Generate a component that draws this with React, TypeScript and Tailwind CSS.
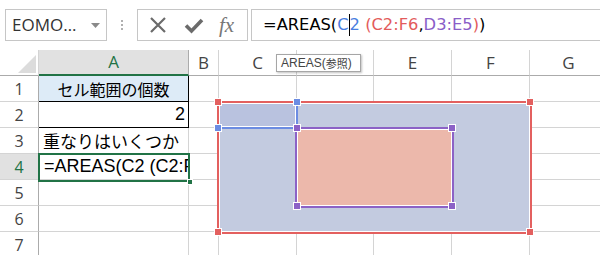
const font = "font-['Open_Sans','Liberation_Sans',sans-serif]";
const cjk = "font-['Noto_Sans_CJK_JP',sans-serif]";
const arial = "font-['Liberation_Sans',sans-serif]";

const cols = ["A", "B", "C", "D", "E", "F", "G"];
const rows = [1, 2, 3, 4, 5, 6, 7];

type Box = { x: number; y: number; w: number; h: number };

function Handle({ cx, cy, color }: { cx: number; cy: number; color: string }) {
  return (
    <div
      className="absolute h-2 w-2 border border-white"
      style={{ left: cx - 4, top: cy - 4, background: color }}
    />
  );
}

function RangeBorder({ b, color }: { b: Box; color: string }) {
  return (
    <div
      className="absolute border-2 shadow-[inset_0_0_0_1px_white]"
      style={{ left: b.x, top: b.y, width: b.w, height: b.h, borderColor: color }}
    />
  );
}

// overlay coordinates relative to the grid (grid top = page y 50)
const red: Box = { x: 217, y: 51, w: 315, h: 133 };
const blue: Box = { x: 217, y: 51, w: 81, h: 28 };
const purple: Box = { x: 295, y: 77, w: 159, h: 81 };

const RED = "#e3605f";
const BLUE = "#6c8ce2";
const PURPLE = "#8c62c6";

function Grid() {
  return (
    <div className="relative overflow-hidden">
      <div className="grid grid-cols-[39px_150px_30px_78px_77px_78px_78px_78px] grid-rows-[26px_repeat(7,26px)]">
        {/* corner */}
        <div className="relative border-r border-b border-r-[#d4d4d4] border-b-[#ababab] bg-white">
          <svg className="absolute left-[18px] top-[5px]" width="18" height="18" viewBox="0 0 18 18">
            <polygon points="18,0 18,18 0,18" fill="#dcdcdc" />
          </svg>
        </div>
        {cols.map((c) => (
          <div
            key={c}
            className={
              c === "A"
                ? "flex items-center justify-center border-r border-r-[#ababab] border-b-2 border-b-[#217346] bg-[#e1e1e1] text-[17px] text-[#217346]"
                : "flex items-center justify-center border-r border-b border-r-[#d4d4d4] border-b-[#ababab] bg-white text-[17px] text-[#444]"
            }
          >
            {c === "D" ? "" : c}
          </div>
        ))}
        {rows.map((r) => (
          <Row key={r} r={r} />
        ))}
      </div>

      {/* range fills */}
      <div className="absolute bg-[#c3cbe0]" style={{ left: red.x, top: red.y, width: red.w, height: red.h }} />
      <div className="absolute bg-[#b9c2df]" style={{ left: blue.x, top: blue.y, width: blue.w, height: blue.h }} />
      <div className="absolute bg-[#ecb8ab]" style={{ left: purple.x, top: purple.y, width: purple.w, height: purple.h }} />

      <RangeBorder b={blue} color={BLUE} />
      <RangeBorder b={purple} color={PURPLE} />
      <RangeBorder b={red} color={RED} />

      <Handle cx={297} cy={52} color={BLUE} />
      <Handle cx={218} cy={78} color={BLUE} />
      <Handle cx={297} cy={78} color={PURPLE} />
      <Handle cx={452} cy={78} color={PURPLE} />
      <Handle cx={297} cy={156} color={PURPLE} />
      <Handle cx={452} cy={156} color={PURPLE} />
      <Handle cx={218} cy={52} color={RED} />
      <Handle cx={530} cy={52} color={RED} />
      <Handle cx={218} cy={182} color={RED} />
      <Handle cx={530} cy={182} color={RED} />

      {/* active cell A4 */}
      <div className="absolute left-[38px] top-[103px] h-[29px] w-[152px] border-2 border-[#217346]" />
      <div className="absolute left-[187px] top-[129px] h-[6px] w-[6px] border border-white bg-[#217346]" />

      {/* function tooltip */}
      <div className="absolute left-[276px] top-[4px] flex h-[18px] w-[85px] items-center border border-[#a6a6a6] bg-white pl-[4px] text-[12px] text-[#444] shadow-[1px_1px_2px_rgba(0,0,0,0.25)]">
        <span className={arial}>AREAS(</span>
        <span className={cjk + " text-[11px]"}>参照</span>
        <span className={arial}>)</span>
      </div>
    </div>
  );
}

function Row({ r }: { r: number }) {
  const head =
    r === 4
      ? "flex items-center justify-center border-r border-b border-r-[#ababab] border-b-[#d4d4d4] bg-[#e1e1e1] text-[16px] text-[#217346]"
      : "flex items-center justify-center border-r border-b border-r-[#ababab] border-b-[#d4d4d4] bg-white text-[16px] text-[#444]";
  let a: React.ReactNode = null;
  let aCls = "border-r border-b border-[#d4d4d4]";
  if (r === 1) {
    aCls = "flex items-center justify-center border-r border-b border-black bg-[#ddebf7]";
    a = <span className={cjk + " text-[16px] text-black"}>セル範囲の個数</span>;
  } else if (r === 2) {
    aCls = "flex items-center justify-end border-r border-b border-black pr-[3px]";
    a = <span className={arial + " text-[18px] text-black"}>2</span>;
  } else if (r === 3) {
    aCls = "flex items-center border-r border-b border-[#d4d4d4] pl-[4px]";
    a = <span className={cjk + " text-[17px] whitespace-nowrap text-black"}>重なりはいくつか</span>;
  } else if (r === 4) {
    aCls = "flex items-center overflow-hidden border-r border-b border-[#d4d4d4] pl-[5px]";
    a = <span className={arial + " whitespace-nowrap text-[18px] text-black"}>=AREAS(C2 (C2:F6,D3:E5))</span>;
  }
  return (
    <>
      <div className={head}>{r}</div>
      <div className={aCls}>{a}</div>
      {cols.slice(1).map((c) => (
        <div key={c} className="border-r border-b border-[#d4d4d4]" />
      ))}
    </>
  );
}

export default function App() {
  return (
    <div className={"h-[255px] w-[600px] overflow-hidden bg-white " + font}>
      <div className="flex h-[50px] items-start pt-[9px]">
        <div className="ml-[5px] flex h-[32px] w-[102px] items-center border border-[#c6c6c6] pl-[6px]">
          <span className="text-[17px] text-[#333]">EOMO…</span>
          <svg className="ml-auto mr-[6px]" width="9" height="5" viewBox="0 0 9 5">
            <polygon points="0,0 9,0 4.5,5" fill="#8a8a8a" />
          </svg>
        </div>
        <div className="flex h-[32px] w-[30px] flex-col items-center justify-center gap-[2px]">
          <span className="h-[2px] w-[2px] bg-[#b0b0b0]" />
          <span className="h-[2px] w-[2px] bg-[#b0b0b0]" />
          <span className="h-[2px] w-[2px] bg-[#b0b0b0]" />
        </div>
        <div className="flex h-[32px] w-[111px] items-center border border-[#c6c6c6]">
          <svg className="ml-[11px]" width="18" height="18" viewBox="0 0 18 18">
            <path d="M2 2 L16 16 M16 2 L2 16" stroke="#6b6b6b" strokeWidth="2.2" />
          </svg>
          <svg className="ml-[17px]" width="20" height="18" viewBox="0 0 20 18">
            <path d="M2 9.5 L7.5 15 L18 4" stroke="#6b6b6b" strokeWidth="3.6" fill="none" />
          </svg>
          <span className="ml-[15px] font-['Liberation_Serif',serif] text-[21px] italic leading-none text-[#777]">
            fx
          </span>
        </div>
        <div className="ml-[3px] flex h-[32px] flex-1 items-center border border-r-0 border-[#c6c6c6] pl-[11px] font-['DejaVu_Sans',sans-serif] text-[16.3px] whitespace-nowrap">
          <span className="text-black">=AREAS(</span>
          <span className="text-[#4a7ee0]">C</span>
          <span className="h-[22px] w-px bg-black" />
          <span className="text-[#4a7ee0]">2</span>
          <span className="text-[#e35b5b]">&nbsp;(C2:F6</span>
          <span className="text-black">,</span>
          <span className="text-[#8a5ec8]">D3:E5</span>
          <span className="text-[#e35b5b]">)</span>
          <span className="text-black">)</span>
        </div>
      </div>
      <Grid />
    </div>
  );
}
